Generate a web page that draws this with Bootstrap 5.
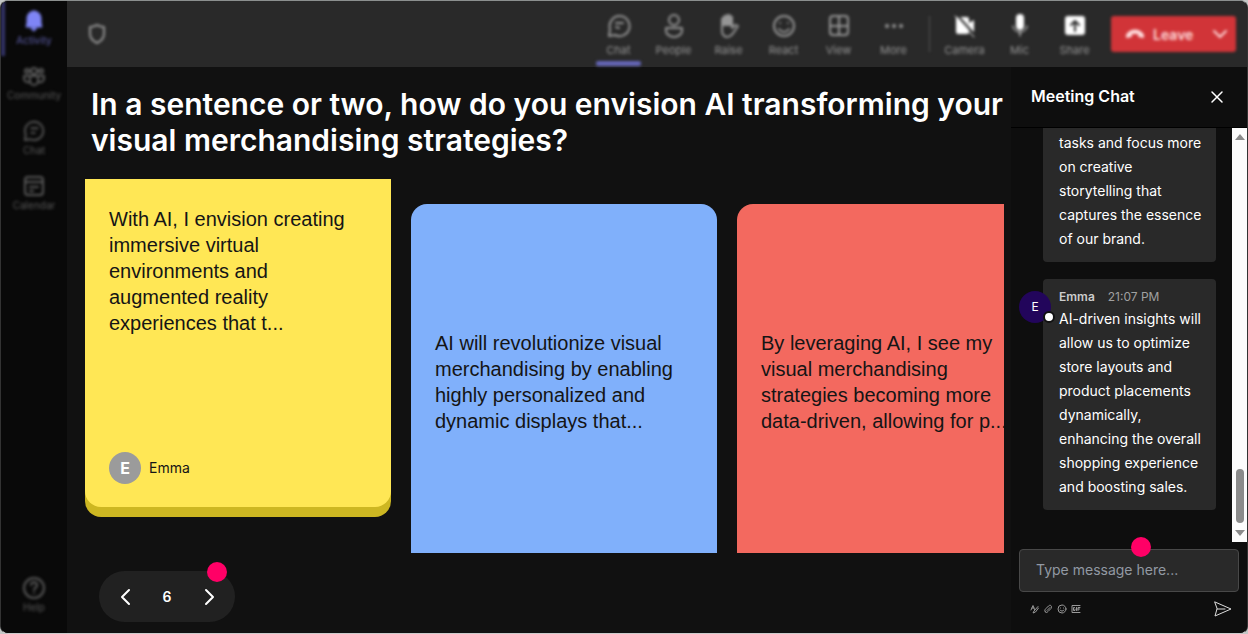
<!DOCTYPE html>
<html lang="en">
<head>
<meta charset="utf-8">
<meta name="viewport" content="width=device-width, initial-scale=1">
<title>Meeting</title>
<link href="https://cdn.jsdelivr.net/npm/bootstrap@5.3.0/dist/css/bootstrap.min.css" rel="stylesheet">
<script src="https://cdn.jsdelivr.net/npm/bootstrap@5.3.0/dist/js/bootstrap.bundle.min.js" defer></script>
<style>
body{background:#c4c7c6;font-family:Inter,"Liberation Sans",sans-serif;color:#fff}
.app-window{height:100vh;background:#111;border:1px solid;border-color:#8b8f8e #333 #ccc #333;border-radius:8px;overflow:hidden}
svg{display:block;fill:none;stroke:currentColor;stroke-width:2;stroke-linecap:round;stroke-linejoin:round}
.plain-btn{background:none;border:0;padding:0;color:inherit}
.min-h-0{min-height:0}
/* navigation out of focus */
.side-rail{width:66px;background:#090909;color:#585858}
.soft{filter:blur(.1rem)}
.rail-btn{height:55px;width:66px;font-size:10px;line-height:12px;padding-top:9px;gap:2px}
.rail-btn.current{color:#5d5eaa;box-shadow:inset 4px 0 #35356a}
.rail-btn.current svg{color:#7f85f5;fill:#7f85f5}
.help-btn{margin-bottom:10px}
.top-bar{height:66px;background:#292929;color:#959595;padding-right:11px}
.shield{margin-left:18px}
.tool-btn{width:55px;height:66px;font-size:11px;line-height:14px;padding-top:12px;gap:4px;position:relative}
.tool-btn.current::after{content:"";position:absolute;left:5px;right:5px;bottom:1px;height:5px;border-radius:2px;background:#6566b8}
.tool-btn.bright svg{color:#fff}
.tool-rule{width:1px;height:36px;background:#555;margin:0 7px 0 8px}
.leave-btn{width:125px;height:36px;margin-left:9px;padding:0 8px 0 14px;border-radius:3px;background:#d13438;color:#ffdcdc;font-size:14px;font-weight:600}
/* question board */
.stage{padding:19px 0 10px 18px}
.question{font-size:30px;line-height:36px;font-weight:600;padding-left:6px;margin-bottom:21px}
.notes{height:374px;gap:20px;overflow:hidden;margin-right:7px}
.note{width:306px;flex:none;padding:24px;font:20px/26px "Liberation Sans",Arial,sans-serif;color:#151515}
.note-yellow{height:338px;padding-top:27px;background:#cdb722;border-radius:0 0 16px 16px;position:relative;z-index:0}
.note-yellow::before{content:"";position:absolute;z-index:-1;inset:0 0 10px;background:#ffe755;border-radius:0 0 16px 16px}
.note-blue,.note-red{height:374px;margin-top:25px;padding-bottom:42px;border-radius:16px}
.note-blue{background:#80b0fb}
.note-red{background:#f3695f}
.author{font:14px/20px Inter,sans-serif;gap:8px;margin-bottom:9px}
.author-dot{width:32px;height:32px;background:#9b9b9b;color:#fff;font-weight:700;font-size:16px}
.pager{width:136px;height:51px;border-radius:26px;background:#212121;margin:18px 0 0 14px;padding:0 18px;font-size:14px;font-weight:600;position:relative}
.hot-dot{position:absolute;width:20px;height:20px;border-radius:50%;background:#ff0066}
.pager .hot-dot{right:8px;top:-9px}
/* chat */
.chat-pane{width:236px;background:#0e0e0e}
.chat-head{height:61px;border-bottom:1px solid #000;padding:0 22px 0 20px}
.chat-head h2{font-size:16px;font-weight:600}
.feed{overflow:hidden;padding:0 16px 32px 32px;gap:17px}
.bubble{position:relative;background:#292929;border-radius:4px;padding:8px 12px 11px 16px;font-size:14px;line-height:24px;flex:none}
.by-line{font-size:12px;line-height:20px;gap:13px;color:#a0a0a0}
.by-line b{font-weight:600;color:#ccc}
.chat-avatar{position:absolute;left:-24px;top:12px;width:32px;height:32px;border-radius:50%;background:#22055b;font-size:12px}
.presence{position:absolute;right:-4px;bottom:0;width:12px;height:12px;border-radius:50%;background:#fff;border:2px solid #111}
.scroll-track{width:15px;background:#fcfcfc;padding:6px 0}
.scroll-thumb{width:8px;height:54px;border-radius:4px;background:#8b8b8b;margin-bottom:7px}
.scroll-track svg{fill:#8b8b8b;stroke:none}
.composer{padding:7px 8px 15px}
.composer-box{position:relative}
.composer input{height:43px;background:#292929;border:1px solid #484848;border-radius:4px;font-size:14px;padding:0 16px 2px;color:#fff}
.composer input::placeholder{color:#9299a3;opacity:1}
.composer .hot-dot{left:112px;top:-12px}
.mini-tools{padding:8px 7px 0 10px;color:#999;gap:4px}
.send-btn{color:#ddd}
</style>
</head>
<body>
<div class="app-window d-flex">
  <nav class="side-rail d-flex flex-column justify-content-between flex-shrink-0" aria-label="Apps">
    <div class="soft">
      <button class="plain-btn rail-btn current d-flex flex-column align-items-center"><svg width="24" height="22" viewBox="0 0 24 22"><path d="M12 1a7 7 0 0 0-7 7v5l-1 4h16l-1-4V8a7 7 0 0 0-7-7zM9 18h6l-3 3z" stroke-width="1"/></svg>Activity</button>
      <button class="plain-btn rail-btn d-flex flex-column align-items-center"><svg width="24" height="22" viewBox="0 0 24 22"><circle cx="12" cy="6" r="3"/><circle cx="5" cy="6" r="2"/><circle cx="19" cy="6" r="2"/><path d="M8 11h8v5a4 4 0 0 1-8 0zM7 11H2v3a4 4 0 0 0 5 3M17 11h5v3a4 4 0 0 1-5 3"/></svg>Community</button>
      <button class="plain-btn rail-btn d-flex flex-column align-items-center"><svg width="24" height="22" viewBox="0 0 24 24"><path d="M2 22l1-6a10 10 0 1 1 5 5zM9 9h7M9 14h4"/></svg>Chat</button>
      <button class="plain-btn rail-btn d-flex flex-column align-items-center"><svg width="24" height="22" viewBox="0 0 24 22"><rect x="3" y="2" width="18" height="18" rx="3"/><path d="M3 7h18M8 12h8M8 16h3"/></svg>Calendar</button>
    </div>
    <div class="soft help-btn"><button class="plain-btn rail-btn d-flex flex-column align-items-center"><svg width="24" height="22" viewBox="0 0 24 22"><circle cx="12" cy="11" r="10"/><path d="M9 8a3 3 0 1 1 4 3l-1 2m0 3v.1"/></svg>Help</button></div>
  </nav>

  <div class="d-flex flex-column flex-grow-1 overflow-hidden">
    <header class="top-bar d-flex align-items-center flex-shrink-0">
      <button class="plain-btn shield soft" aria-label="Security"><svg width="24" height="24" viewBox="0 0 24 24"><path d="M12 3c2 1 4 2 7 2v7c0 5-3 7-7 9-4-2-7-4-7-9V5c3 0 5-1 7-2z"/></svg></button>
      <div class="d-flex align-items-center ms-auto soft">
        <button class="plain-btn tool-btn current d-flex flex-column align-items-center"><svg width="24" height="26" viewBox="0 0 24 26"><path d="M2 23l1-7a10 10 0 1 1 5 6zM9 10h7M9 14l3 1"/></svg>Chat</button>
        <button class="plain-btn tool-btn d-flex flex-column align-items-center"><svg width="24" height="26" viewBox="0 0 24 26"><circle cx="12" cy="7" r="5"/><path d="M4 15h16v3c0 3-4 6-8 6s-8-3-8-6z"/></svg>People</button>
        <button class="plain-btn tool-btn d-flex flex-column align-items-center"><svg width="24" height="26" viewBox="0 0 24 26"><path d="M5 12V6l3-3 4-1 3 2v8H5z" fill="currentColor"/><path d="M5 12v6c0 3 2 6 5 6 5 0 6-4 9-8l2-3-3-1-3 3v-5"/></svg>Raise</button>
        <button class="plain-btn tool-btn d-flex flex-column align-items-center"><svg width="24" height="26" viewBox="0 0 24 26"><circle cx="12" cy="13" r="10"/><path d="M8 10v.1M16 10v.1M7 16c3 4 7 4 10 0"/></svg>React</button>
        <button class="plain-btn tool-btn d-flex flex-column align-items-center"><svg width="24" height="26" viewBox="0 0 24 26"><rect x="3" y="3" width="18" height="19" rx="3"/><path d="M12 3v19M3 13h18"/></svg>View</button>
        <button class="plain-btn tool-btn d-flex flex-column align-items-center"><svg width="24" height="26" viewBox="0 0 24 26"><path d="M5 13h.1M12 13h.1M19 13h.1" stroke-width="4"/></svg>More</button>
        <span class="tool-rule"></span>
        <button class="plain-btn tool-btn bright d-flex flex-column align-items-center"><svg width="24" height="26" viewBox="0 0 24 26"><path d="M3 4h11a2 2 0 0 1 2 2v4l5-3v12l-5-3v3a2 2 0 0 1-2 2H5a2 2 0 0 1-2-2z" fill="currentColor" stroke="none"/><path d="M4 2l18 20" stroke="#292929"/><path d="M2 3l19 21" stroke-width="1"/></svg>Camera</button>
        <button class="plain-btn tool-btn bright d-flex flex-column align-items-center"><svg width="24" height="26" viewBox="0 0 24 26"><rect x="8" y="1" width="8" height="16" rx="4" fill="currentColor" stroke="none"/><path d="M5 13c0 8 14 8 14 0M12 19v4" stroke-width="1"/></svg>Mic</button>
        <button class="plain-btn tool-btn bright d-flex flex-column align-items-center"><svg width="24" height="26" viewBox="0 0 24 26"><rect x="2" y="3" width="20" height="19" rx="3" fill="currentColor" stroke="none"/><path d="M12 18V8m-4 4l4-4 4 4" stroke="#292929"/></svg>Share</button>
        <button class="plain-btn leave-btn d-flex align-items-center"><svg class="me-2" width="20" height="12" viewBox="0 0 20 12"><path d="M2 9V7c4-6 12-6 16 0v2l-4-1V5H6v3z" fill="currentColor"/></svg>Leave<svg class="ms-auto" width="16" height="12" viewBox="0 0 16 12"><path d="M2 3l6 6 6-6"/></svg></button>
      </div>
    </header>

    <div class="d-flex flex-grow-1 min-h-0">
      <main class="stage flex-grow-1 overflow-hidden">
        <h1 class="question">In a sentence or two, how do you envision AI transforming your visual merchandising strategies?</h1>
        <section class="notes d-flex align-items-start">
          <article class="note note-yellow d-flex flex-column justify-content-between">
            <div>With AI, I envision creating immersive virtual environments and augmented reality experiences that t...</div>
            <div class="author d-flex align-items-center"><span class="author-dot rounded-circle d-flex align-items-center justify-content-center">E</span>Emma</div>
          </article>
          <article class="note note-blue d-flex align-items-center"><div>AI will revolutionize visual merchandising by enabling highly personalized and dynamic displays that...</div></article>
          <article class="note note-red d-flex align-items-center"><div>By leveraging AI, I see my visual merchandising strategies becoming more data-driven, allowing for p...</div></article>
        </section>
        <div class="pager d-flex align-items-center justify-content-between">
          <button class="plain-btn" aria-label="Previous"><svg width="16" height="20" viewBox="0 0 16 20"><path d="M12 3l-7 7 7 7"/></svg></button>
          <span>6</span>
          <button class="plain-btn" aria-label="Next"><svg width="16" height="20" viewBox="0 0 16 20"><path d="M5 3l7 7-7 7"/></svg></button>
          <span class="hot-dot"></span>
        </div>
      </main>

      <aside class="chat-pane d-flex flex-column flex-shrink-0">
        <div class="chat-head d-flex align-items-center justify-content-between flex-shrink-0">
          <h2 class="m-0">Meeting Chat</h2>
          <button class="plain-btn" aria-label="Close"><svg width="16" height="16" viewBox="0 0 16 16"><path d="M3 3l10 10M13 3L3 13" stroke-width="1.5"/></svg></button>
        </div>
        <div class="d-flex flex-grow-1 min-h-0">
          <div class="feed d-flex flex-column justify-content-end flex-grow-1">
            <div class="bubble">tasks and focus more on creative storytelling that captures the essence of our brand.</div>
            <div class="bubble">
              <span class="chat-avatar d-flex align-items-center justify-content-center">E<i class="presence"></i></span>
              <div class="by-line d-flex"><b>Emma</b><span>21:07 PM</span></div>
              AI-driven insights will allow us to optimize store layouts and product placements dynamically, enhancing the overall shopping experience and boosting sales.
            </div>
          </div>
          <div class="scroll-track d-flex flex-column align-items-center flex-shrink-0">
            <svg width="10" height="6" viewBox="0 0 10 6"><path d="M5 0l5 6H0z"/></svg>
            <div class="scroll-thumb mt-auto"></div>
            <svg width="10" height="6" viewBox="0 0 10 6"><path d="M0 0h10L5 6z"/></svg>
          </div>
        </div>
        <div class="composer flex-shrink-0">
          <div class="composer-box"><input class="w-100" type="text" placeholder="Type message here..." aria-label="Type message here"><span class="hot-dot"></span></div>
          <div class="mini-tools d-flex align-items-center">
            <button class="plain-btn" aria-label="Format"><svg width="10" height="10" viewBox="0 0 20 20"><path d="M4 12L8 3l3 8M6 8h4M18 5l-8 9-2 4 5-2 6-8"/></svg></button>
            <button class="plain-btn" aria-label="Attach"><svg width="10" height="10" viewBox="0 0 20 20"><path d="M8 13l6-6M5 16c-3-3-1-5 1-7l5-5c4-4 8 1 5 5l-6 6c-2 2-3 3-5 1z"/></svg></button>
            <button class="plain-btn" aria-label="Emoji"><svg width="10" height="10" viewBox="0 0 20 20"><circle cx="10" cy="10" r="8"/><path d="M7 8v.1M13 8v.1M6 12c2 3 6 3 8 0"/></svg></button>
            <button class="plain-btn" aria-label="GIF"><svg width="10" height="10" viewBox="0 0 20 20"><path d="M18 3H2v14h16M7 7H5v6h3v-3M11 7v6M14 13V7h4M14 10h3"/></svg></button>
            <button class="plain-btn send-btn ms-auto" aria-label="Send"><svg width="18" height="18" viewBox="0 0 18 18"><path d="M1 2l16 7-16 7 2-7zM3 9h8" stroke-width="1"/></svg></button>
          </div>
        </div>
      </aside>
    </div>
  </div>
</div>
</body>
</html>
